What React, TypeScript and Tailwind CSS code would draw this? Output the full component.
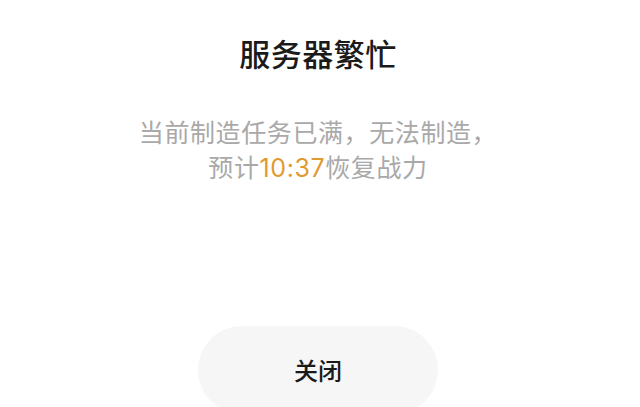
export default function App() {
  return (
    <div
      className="w-[640px] h-[407px] bg-white overflow-hidden flex flex-col items-center pr-[4px]"
      style={{ fontFamily: '"Noto Sans CJK SC", "Noto Sans", sans-serif' }}
    >
      <div className="mt-[33px] h-[40px] leading-[40px] text-[31px] font-medium text-[#1a1a1a] tracking-[0.5px]">
        服务器繁忙
      </div>
      <div className="mt-[41px] text-[25px] leading-[35px] text-[#a9a9a9] text-center tracking-[0.6px]">
        <div>当前制造任务已满，无法制造，</div>
        <div>
          预计<span className="text-[#e19a32]" style={{ fontFamily: '"Inter", "Noto Sans", sans-serif' }}>10:37</span>恢复战力
        </div>
      </div>
      <button className="mt-[140px] w-[240px] h-[88px] shrink-0 rounded-full bg-[#f6f6f6] text-[24px] font-medium text-[#1a1a1a] flex items-center justify-center">
        关闭
      </button>
    </div>
  );
}
